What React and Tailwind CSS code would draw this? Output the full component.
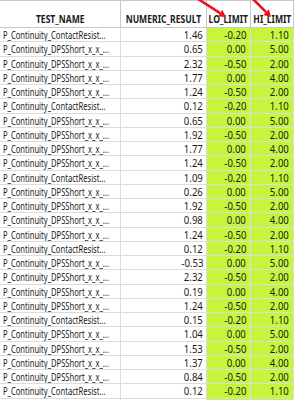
const CONTACT = 'P_Continuity_ContactResist...'
const DPS = 'P_Continuity_DPSShort_x_x_...'

// name, result, lo, hi
const rows = [
  [CONTACT, '1.46', '-0.20', '1.10'],
  [DPS, '0.65', '0.00', '5.00'],
  [DPS, '2.32', '-0.50', '2.00'],
  [DPS, '1.77', '0.00', '4.00'],
  [DPS, '1.24', '-0.50', '2.00'],
  [CONTACT, '0.12', '-0.20', '1.10'],
  [DPS, '0.65', '0.00', '5.00'],
  [DPS, '1.92', '-0.50', '2.00'],
  [DPS, '1.77', '0.00', '4.00'],
  [DPS, '1.24', '-0.50', '2.00'],
  [CONTACT, '1.09', '-0.20', '1.10'],
  [DPS, '0.26', '0.00', '5.00'],
  [DPS, '1.92', '-0.50', '2.00'],
  [DPS, '0.98', '0.00', '4.00'],
  [DPS, '1.24', '-0.50', '2.00'],
  [CONTACT, '0.12', '-0.20', '1.10'],
  [DPS, '-0.53', '0.00', '5.00'],
  [DPS, '2.32', '-0.50', '2.00'],
  [DPS, '0.19', '0.00', '4.00'],
  [DPS, '1.24', '-0.50', '2.00'],
  [CONTACT, '0.15', '-0.20', '1.10'],
  [DPS, '1.04', '0.00', '5.00'],
  [DPS, '1.53', '-0.50', '2.00'],
  [DPS, '1.37', '0.00', '4.00'],
  [DPS, '0.84', '-0.50', '2.00'],
  [CONTACT, '0.12', '-0.20', '1.10'],
  [DPS, '0.65', '0.00', '5.00'],
]

const cell = 'h-[14.25px] border-r border-b border-[#dcdcdc] leading-[13px] text-[11px] whitespace-nowrap overflow-hidden'
const head = 'h-[27px] border-r border-b border-[#c8c8c8] flex items-end justify-center pb-[3px] text-[11px] font-bold leading-none whitespace-nowrap'

const Arrow = ({ x1, y1, x2, y2 }) => {
  const a = Math.atan2(y2 - y1, x2 - x1)
  const l = 7
  const w = 4
  const bx = x2 - l * Math.cos(a)
  const by = y2 - l * Math.sin(a)
  const px = -Math.sin(a) * w
  const py = Math.cos(a) * w
  return (
    <>
      <line x1={x1} y1={y1} x2={bx} y2={by} stroke="#e8141a" strokeWidth="2.6" />
      <polygon points={`${x2},${y2} ${bx + px},${by + py} ${bx - px},${by - py}`} fill="#e8141a" />
    </>
  )
}

const Head = ({ children }) => (
  <div className={head}>
    <span className="inline-block shrink-0 origin-center scale-x-[0.78]">{children}</span>
  </div>
)

const Num = ({ children, green }) => (
  <div className={`${cell} text-right ${green ? 'pr-[4px] bg-[#c6f53e]' : 'pr-[3px]'}`}>
    <span className="inline-block origin-right scale-x-[0.87]">{children}</span>
  </div>
)

export default function App() {
  return (
    <div className="relative w-[297px] h-[400px] overflow-hidden bg-white text-[#1a1a1a]" style={{ fontFamily: '"Noto Sans", "Open Sans", sans-serif' }}>
      <div className="grid grid-cols-[121px_86px_44px_43px] border-t border-[#c8c8c8] w-[294px]">
        <Head>TEST_NAME</Head>
        <Head>NUMERIC_RESULT</Head>
        <Head>LO_LIMIT</Head>
        <Head>HI_LIMIT</Head>
        {rows.map((r, i) => (
          <div key={i} className="contents">
            <div className={`${cell} pl-[3px]`}>
              <span className="inline-block origin-left scale-x-[0.69]">{r[0]}</span>
            </div>
            <Num>{r[1]}</Num>
            <Num green>{r[2]}</Num>
            <Num green>{r[3]}</Num>
          </div>
        ))}
      </div>
      <svg className="absolute left-0 top-0" width="297" height="30">
        <Arrow x1={198} y1={-1} x2={226} y2={17} />
        <Arrow x1={253} y1={-1} x2={271} y2={17} />
      </svg>
    </div>
  )
}
